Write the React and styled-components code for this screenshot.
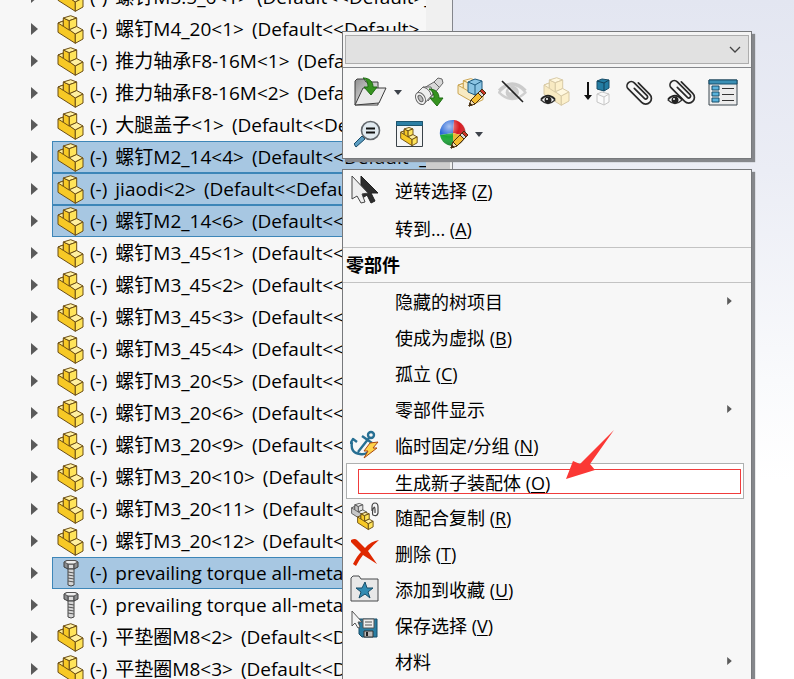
import React from "react";
import styled, { createGlobalStyle, css } from "styled-components";

const Global = createGlobalStyle`
  * { box-sizing: border-box; }
  html, body { margin: 0; }
  body {
    font-family: "Open Sans", "Noto Sans CJK SC", sans-serif;
    font-size: 18px;
    color: #000;
    overflow: hidden;
  }
  button, select { font: inherit; color: inherit; }
  svg { flex: none; }
`;

const Workspace = styled.div`
  position: relative;
  display: flex;
  height: 100vh;
  overflow: hidden;
  background: linear-gradient(#e3e6f1 0px, #ebedf5 170px, #f9fafc 380px, #ffffff 480px);
`;

const TreePanel = styled.aside`
  display: flex;
  flex: none;
  width: 453px;
  background: #f7f7f7;
  border-right: 1px solid #84868c;
`;

const Tree = styled.ul`
  flex: 1;
  min-width: 0;
  margin: -19px 0 0;
  padding: 0;
  list-style: none;
  overflow: hidden;
`;

const TreeItem = styled.li`
  display: flex;
  align-items: center;
  height: 32px;
`;

const Expander = styled.button`
  display: flex;
  flex: none;
  width: 52px;
  padding: 0 0 0 31px;
  border: 0;
  background: none;
`;

const NodeLabel = styled.span`
  display: flex;
  flex: 1;
  align-items: center;
  gap: 5px;
  min-width: 0;
  height: 32px;
  padding-left: 4px;
  border: 1px solid transparent;
  border-right: 0;
  font-size: 19px;
  line-height: 26px;
  white-space: nowrap;
  overflow: hidden;
  ${(p) => p.$selected && css`
    background: #a7c7e2;
    border-color: #3d86b8;
  `}
`;

const NodeText = styled.span`
  display: flex;
  gap: 8px;
`;

const ScrollTrack = styled.div`
  flex: none;
  display: flex;
  flex-direction: column;
  width: 26px;
  padding-top: 100px;
  background: #f0f0f0;
`;

const ScrollThumb = styled.div`
  width: 24px;
  height: 300px;
  background: #cdcdcd;
`;

const Overlay = styled.div`
  position: absolute;
  top: 31px;
  left: 342px;
  display: flex;
  flex-direction: column;
  gap: 10px;
  width: 410px;
`;

const popup = css`
  background: #f7f7f7;
  border: 1px solid #77797c;
  box-shadow: 3px 3px 1px #85878b;
`;

const QuickBar = styled.section`
  ${popup}
`;

const SelectRow = styled.div`
  display: flex;
  padding: 3px 2px;
  border-bottom: 1px solid #85878b;
  background: #f4f4f4;
`;

const SelectFrame = styled.label`
  display: grid;
  flex: 1;
  align-items: center;
  background: #e1e1e1;
  border: 1px solid #adadad;

  & > * { grid-area: 1 / 1; }
  & > svg { justify-self: end; margin-right: 7px; pointer-events: none; }
`;

const ContextSelect = styled.select`
  width: 100%;
  height: 27px;
  border: 0;
  background: transparent;
  appearance: none;
`;

const ToolRows = styled.div`
  padding: 3px 11px;
`;

const ToolRow = styled.div`
  display: flex;
  align-items: center;
  gap: 12px;
  height: 42px;
`;

const Tool = styled.button`
  display: flex;
  flex: none;
  align-items: center;
  gap: 7px;
  padding: 0;
  border: 0;
  background: none;
`;

const Menu = styled.ul`
  ${popup}
  margin: 0;
  padding: 1px 0;
  list-style: none;
`;

const MenuHeading = styled.li`
  height: 36px;
  padding-left: 3px;
  border-top: 1px solid #c3c3c3;
  border-bottom: 1px solid #c3c3c3;
  font-weight: 700;
  line-height: 34px;
`;

const MenuItem = styled.button`
  display: grid;
  grid-template-columns: 52px 1fr 24px;
  align-items: center;
  width: 100%;
  height: ${(p) => (p.$tall ? 38 : 36)}px;
  padding: 0;
  border: 0;
  background: none;
  text-align: left;
`;

const HotItem = styled.button`
  display: block;
  width: 398px;
  height: 36px;
  margin: 0 3px;
  padding: 5px 2px 5px 11px;
  border: 1px solid #aeb0b0;
  background: #fff;
  text-align: left;
`;

const HotFrame = styled.span`
  display: flex;
  align-items: center;
  height: 25px;
  padding-left: 36px;
  border: 1px solid #f03c3c;
`;

const IconSlot = styled.span`
  display: flex;
  padding-left: 7px;
`;

const Key = styled.u`
  text-decoration-thickness: 1px;
  text-underline-offset: 2px;
`;

const Pointer = styled.svg`
  position: absolute;
  top: 430px;
  left: 565px;
`;

const Svg = ({ size = 30, children, ...rest }) => (
  <svg width={size} height={size} viewBox={`0 0 ${size} ${size}`} strokeLinejoin="round" aria-hidden="true" {...rest}>
    {children}
  </svg>
);

const Triangle = ({ w = 7, h = 12 }) => (
  <svg width={w} height={h} viewBox="0 0 7 12" aria-hidden="true"><path d="M0 0L7 6L0 12Z" fill="#5a5a5a" /></svg>
);

const DropMark = () => (
  <svg width="8" height="5" viewBox="0 0 8 5" aria-hidden="true"><path d="M0 0H8L4 5Z" fill="#3e434b" /></svg>
);

const partColors = {
  gold: { line: "#6b4d14", top: "#fff0a0", left: "#f7c926", right: "#ffe45a" },
  pale: { line: "#d8caa6", top: "#fff8e0", left: "#f8eac2", right: "#fcf0cb" },
  gray: { line: "#565656", top: "#f3f3f3", left: "#c7c7c7", right: "#e3e3e3" },
};

const PartShape = ({ tone = "gold", ...rest }) => {
  const c = partColors[tone];
  return (
    <g stroke={c.line} strokeWidth="1" strokeLinejoin="round" {...rest}>
      <path d="M1 8L6.300 6L12.300 10V14.300L18.300 19V28.300L1 17.300Z" fill={c.left} />
      <path d="M1 8L6.300 6V11.300Z" fill={c.top} />
      <path d="M6.300 3L12.300 5.700V15.200L6.300 11.300Z" fill={c.left} />
      <path d="M6.300 3L13.700 .7L19.700 3L12.300 5.700Z" fill={c.top} />
      <path d="M12.300 5.700L19.700 3V11.500L12.300 14.800Z" fill={c.right} />
      <path d="M12.300 14.800L19.700 11.500L26 15L18.300 19Z" fill={c.top} />
      <path d="M18.300 19L26 15V24L18.300 28.300Z" fill={c.right} />
    </g>
  );
};

const PartIcon = () => (
  <svg width="28" height="29" viewBox="0 0 28 29" aria-hidden="true"><PartShape /></svg>
);

const BoltIcon = () => (
  <svg width="28" height="29" viewBox="0 0 28 29" aria-hidden="true" strokeLinejoin="round">
    <path d="M11 9H17V26L14 27L11 26Z" fill="#d5d5d5" stroke="#444" />
    <path d="M11 13L17 14M11 16L17 17M11 19L17 20M11 22L17 23" stroke="#555" />
    <path d="M7 3L10 1.500H18L21 3V8L17 10H11L7 8Z" fill="#8c8e90" stroke="#3c3c3c" />
    <path d="M7 3L10 1.500H18L21 3L17 5H11Z" fill="#eee" stroke="#555" />
    <path d="M11 5V10M17 5V10" stroke="#444" />
    <path d="M12 6H16V9H12Z" fill="#ddd" />
  </svg>
);

const GreenArrow = (props) => (
  <path d="M0 0C7 0 10 4 10 9H14L8 17L1 9H5C5 5 4 2 0 0Z" fill="#36931f" stroke="#1d6c12" {...props} />
);

const Pencil = (props) => (
  <g stroke="#4c3210" strokeLinejoin="round" {...props}>
    <path d="M1 17L3 11L12 2L16 6L7 15Z" fill="#f5bd32" />
    <path d="M10 4L12.500 1.500L16.500 5.500L14 8Z" fill="#d9d9d9" />
    <path d="M12 2L14 0L18 4L16 6Z" fill="#cb3528" />
    <path d="M3 11L7 15L1 17Z" fill="#f3dfb6" />
    <path d="M1 17L2 14L4 16Z" fill="#222" />
  </g>
);

const Eye = (props) => (
  <g {...props}>
    <path d="M0 6Q7 -2 14 6Q7 13 0 6Z" fill="#f4f4f4" stroke="#333" strokeWidth="1.200" />
    <path d="M0 5Q7 -2 14 5" fill="none" stroke="#222" strokeWidth="1.500" />
    <circle cx="7" cy="6" r="3.500" fill="#222" />
    <circle cx="6" cy="5" r="1" fill="#fff" />
  </g>
);

const Clip = (props) => (
  <g {...props}>
    <path
      d="M-1.500 -7V8A2 2 0 0 0 2.500 8V-11A4.500 4.500 0 0 0 -6.500 -11V9A6 6 0 0 0 5.500 9V-8"
      transform="rotate(-45) scale(0.950)"
      fill="none" stroke="#2a2a2a" strokeWidth="1.800" strokeLinecap="round"
    />
  </g>
);

const OpenIcon = () => (
  <Svg size={33}>
    <defs>
      <linearGradient id="folder" x1="0" y1="0" x2="1" y2="1"><stop stopColor="#8f8f8f" /><stop offset="1" stopColor="#fff" /></linearGradient>
    </defs>
    <path d="M1 29V5L3 3H10L12 6H24V29Z" fill="url(#folder)" stroke="#3c3c3c" />
    <path d="M1 29L9 12H32L25 27Z" fill="#e9e9e9" stroke="#3c3c3c" />
    <GreenArrow transform="translate(9 2)" />
  </Svg>
);

const BinocularIcon = () => (
  <Svg>
    <g stroke="#666" fill="#ddd">
      <path d="M10 11L20 5L24 1L28 2L29 6L24 12L14 24Z" fill="#d8d8d8" />
      <path d="M3 16L9 10L17 10L19 17L10 27Z" fill="#eee" />
      <path d="M20 5L25 10M9 10Q16 12 17 18" fill="none" />
      <ellipse cx="6.500" cy="21.500" rx="4.500" ry="6.500" transform="rotate(-30 6.500 21.500)" fill="#f2f2f2" />
      <ellipse cx="6.500" cy="21.500" rx="2" ry="3.500" transform="rotate(-30 6.500 21.500)" fill="#b9b9b9" />
    </g>
    <GreenArrow transform="translate(15 12)" />
  </Svg>
);

const EditPartIcon = () => (
  <Svg>
    <PartShape tone="pale" stroke="#c7a04a" transform="translate(1 1) scale(1 0.900)" />
    <path d="M12 5L19 2L26 4V14L19 18L12 15Z" fill="#8bc4e3" stroke="#205c80" />
    <path d="M12 5L19 8L26 4M19 8V18" fill="none" stroke="#205c80" />
    <Pencil transform="translate(12 12)" />
  </Svg>
);

const HideIcon = () => (
  <Svg>
    <g opacity="0.200" transform="translate(1 4) scale(1.900)"><Eye /></g>
    <path d="M4 4L25 25" stroke="#222" strokeWidth="1.600" />
  </Svg>
);

const ShowPartIcon = () => (
  <Svg><PartShape tone="pale" transform="translate(3 0)" /><Eye transform="translate(1 17)" /></Svg>
);

const SuppressIcon = () => (
  <Svg>
    <path d="M6 5V19" stroke="#111" strokeWidth="2" />
    <path d="M2 18H10L6 23Z" fill="#111" />
    <path d="M15 4L20 2L27 3V11L22 14L15 12Z" fill="#237ca2" stroke="#174d68" />
    <path d="M15 4L22 6L27 3M22 6V14" fill="none" stroke="#123f56" />
    <path d="M15 17L20 15L27 17V25L22 28L15 25Z M15 17L22 20L27 17M22 20V28" fill="#fbfbfb" stroke="#c6c6c6" />
  </Svg>
);

const MateIcon = () => <Svg><Clip transform="translate(16 15)" /></Svg>;
const ViewMateIcon = () => <Svg><Clip transform="translate(17 14)" /><Eye transform="translate(2 17)" /></Svg>;

const PropertiesIcon = () => (
  <Svg>
    <path d="M1 3H29V28H1Z" fill="#ececec" stroke="#3c4850" />
    <path d="M1 3H29V7H1Z" fill="#3b90b5" stroke="#174d68" />
    <path d="M4 9H11V13H4ZM4 15H11V19H4ZM4 21H11V25H4Z" fill="#5ab3dc" stroke="#174d68" />
    <path d="M14 11.500H26M14 17.500H26M14 23.500H26" stroke="#333" />
  </Svg>
);

const MagnifierIcon = () => (
  <Svg>
    <path d="M2 28L0 25L8 17L11 20Z" fill="#5c9dc1" stroke="#164a69" />
    <circle cx="16.500" cy="11.500" r="9" fill="#e1eaf0" stroke="#63686d" strokeWidth="1.600" />
    <path d="M12 9.500H21M12 13.500H21" stroke="#111" strokeWidth="2" />
  </Svg>
);

const WindowPartIcon = () => (
  <Svg>
    <path d="M.5 2.500H26.500V27.500H.5Z" fill="#f4f5f5" stroke="#3a4248" />
    <path d="M.5 2.500H26.500V6.500H.5Z" fill="#2c7fa5" stroke="#1c556f" />
    <PartShape strokeWidth="1.400" transform="translate(4 8) scale(0.660)" />
  </Svg>
);

const AppearanceIcon = () => (
  <Svg>
    <defs>
      <radialGradient id="gloss" cx="0.350" cy="0.250" r="0.800"><stop stopColor="#fff" stopOpacity="0.600" /><stop offset="0.500" stopColor="#fff" stopOpacity="0" /><stop offset="1" stopOpacity="0.350" /></radialGradient>
    </defs>
    <path d="M15 14L2 16A13 13 0 0 1 16 1Z" fill="#2867d8" />
    <path d="M15 14L16 1A13 13 0 0 1 27 17Z" fill="#d81920" />
    <path d="M15 14L27 17A13 13 0 0 1 15 27Z" fill="#e8b92e" />
    <path d="M15 14V27A13 13 0 0 1 2 16Z" fill="#19a836" />
    <circle cx="15" cy="14" r="13" fill="url(#gloss)" />
    <Pencil transform="translate(12 12)" />
  </Svg>
);

const InvertIcon = () => (
  <Svg>
    <path d="M11 1L28 18L21 18L25 26L21 28L17 20L11 24Z" fill="#2d2d2d" stroke="#222" />
    <path d="M2 1L18 18L12 19L15 27L11 28L7 21L2 24Z" fill="#eeeeee" stroke="#444" />
  </Svg>
);

const AnchorIcon = () => (
  <Svg>
    <g fill="none" stroke="#276f93" strokeWidth="2.400">
      <circle cx="21" cy="5" r="3" />
      <path d="M19 8L8 22M12 6L22 13M2 12Q0 23 10 24Q15 25 18 22M0 14L3 9L7 12" />
    </g>
    <path d="M20 13L28 12L23 18H27L14 28L18 21H14Z" fill="#ffd249" stroke="#a84711" />
  </Svg>
);

const CopyMatesIcon = () => (
  <Svg>
    <PartShape tone="gray" strokeWidth="1.500" transform="translate(1 1) scale(0.600)" />
    <PartShape strokeWidth="1.500" transform="translate(7 10) scale(0.620)" />
    <path d="M22 9V5Q22 1 25 1Q28 1 28 5V11Q27 15 23 13Q22 12 23 7Q25 3 25 8V11" fill="none" stroke="#444" strokeWidth="1.200" />
  </Svg>
);

const DeleteIcon = () => (
  <Svg><path d="M1 2Q5 0 7 2L15 10Q21 3 29 2Q23 7 18 13L27 26L13 17Q9 22 6 28L3 26Q7 18 11 14L1 4Z" fill="#df2800" /></Svg>
);

const FavoriteIcon = () => (
  <Svg>
    <path d="M1 27V4L3 2H9L11 5H28V27Z" fill="#e8e8e8" stroke="#46494b" />
    <path d="M15 8L17 14H23L18 18L20 24L15 20L9 24L11 18L6 14H12Z" fill="#328cb3" stroke="#174d68" />
  </Svg>
);

const SaveSelectionIcon = () => (
  <Svg>
    <path d="M9 9H27V27H12L9 24Z" fill="#287da2" stroke="#174d68" />
    <path d="M13 9H24V18H13Z" fill="#eee" stroke="#555" />
    <path d="M15 12H22M15 15H22" stroke="#555" />
    <path d="M14 21H23V27H14Z" fill="#b9b9b9" stroke="#333" /><path d="M16 22H18V26H16Z" fill="#222" />
    <path d="M2 1L12 12L8 12L10 17L8 18L5 13L2 16Z" fill="#f4f4f4" stroke="#555" />
  </Svg>
);

const tail = "(Default<<Default>_";
const rows = [
  ["螺钉M3.5_6<1>"], ["螺钉M4_20<1>"], ["推力轴承F8-16M<1>"], ["推力轴承F8-16M<2>"], ["大腿盖子<1>"],
  ["螺钉M2_14<4>", true], ["jiaodi<2>", true], ["螺钉M2_14<6>", true],
  ["螺钉M3_45<1>"], ["螺钉M3_45<2>"], ["螺钉M3_45<3>"], ["螺钉M3_45<4>"],
  ["螺钉M3_20<5>"], ["螺钉M3_20<6>"], ["螺钉M3_20<9>"], ["螺钉M3_20<10>"], ["螺钉M3_20<11>"], ["螺钉M3_20<12>"],
  ["prevailing torque all-meta", true, true], ["prevailing torque all-meta", false, true],
  ["平垫圈M8<2>"], ["平垫圈M8<3>"],
];

const toolRows = [
  [
    ["打开零件", OpenIcon, true], ["查找", BinocularIcon], ["编辑零件", EditPartIcon], ["隐藏", HideIcon],
    ["显示零部件", ShowPartIcon], ["压缩", SuppressIcon], ["配合", MateIcon], ["查看配合", ViewMateIcon], ["属性", PropertiesIcon],
  ],
  [["放大所选", MagnifierIcon], ["预览窗口", WindowPartIcon], ["外观", AppearanceIcon, true]],
];

const Caption = ({ text, hotkey }) => (
  <span>{text}{hotkey && <> (<Key>{hotkey}</Key>)</>}</span>
);

const Entry = ({ icon: Icon, text, hotkey, sub, tall }) => (
  <li>
    <MenuItem $tall={tall}>
      <IconSlot>{Icon && <Icon />}</IconSlot>
      <Caption text={text} hotkey={hotkey} />
      {sub && <Triangle w={5} h={8} />}
    </MenuItem>
  </li>
);

export default function App() {
  return (
    <Workspace>
      <Global />
      <TreePanel>
        <Tree>
          {rows.map(([name, selected, bolt], i) => (
            <TreeItem key={i}>
              <Expander aria-label="展开"><Triangle /></Expander>
              <NodeLabel $selected={selected}>
                {bolt ? <BoltIcon /> : <PartIcon />}
                <NodeText>
                  <span>(-)</span>
                  <span>{name}</span>
                  {!bolt && <span>{tail}</span>}
                </NodeText>
              </NodeLabel>
            </TreeItem>
          ))}
        </Tree>
        <ScrollTrack><ScrollThumb /></ScrollTrack>
      </TreePanel>
      <Overlay>
        <QuickBar>
          <SelectRow>
            <SelectFrame>
              <ContextSelect aria-label="配置"><option /></ContextSelect>
              <svg width="12" height="8" viewBox="0 0 12 8" aria-hidden="true"><path d="M1 1L6 6L11 1" fill="none" stroke="#444" strokeWidth="1.300" /></svg>
            </SelectFrame>
          </SelectRow>
          <ToolRows>
            {toolRows.map((tools, i) => (
              <ToolRow key={i}>
                {tools.map(([label, Icon, drop]) => (
                  <Tool key={label} aria-label={label}><Icon />{drop && <DropMark />}</Tool>
                ))}
              </ToolRow>
            ))}
          </ToolRows>
        </QuickBar>
        <Menu>
          <Entry icon={InvertIcon} text="逆转选择" hotkey="Z" tall />
          <Entry text="转到..." hotkey="A" tall />
          <MenuHeading>零部件</MenuHeading>
          <Entry text="隐藏的树项目" sub />
          <Entry text="使成为虚拟" hotkey="B" />
          <Entry text="孤立" hotkey="C" />
          <Entry text="零部件显示" sub />
          <Entry icon={AnchorIcon} text="临时固定/分组" hotkey="N" />
          <li><HotItem><HotFrame><Caption text="生成新子装配体" hotkey="O" /></HotFrame></HotItem></li>
          <Entry icon={CopyMatesIcon} text="随配合复制" hotkey="R" />
          <Entry icon={DeleteIcon} text="删除" hotkey="T" />
          <Entry icon={FavoriteIcon} text="添加到收藏" hotkey="U" />
          <Entry icon={SaveSelectionIcon} text="保存选择" hotkey="V" />
          <Entry text="材料" sub />
        </Menu>
      </Overlay>
      <Pointer width="50" height="52" viewBox="0 0 50 52" aria-hidden="true">
        <path d="M49 0L25 34L30 40L1 49L8 31L15 34Z" fill="#fb3835" />
      </Pointer>
    </Workspace>
  );
}
